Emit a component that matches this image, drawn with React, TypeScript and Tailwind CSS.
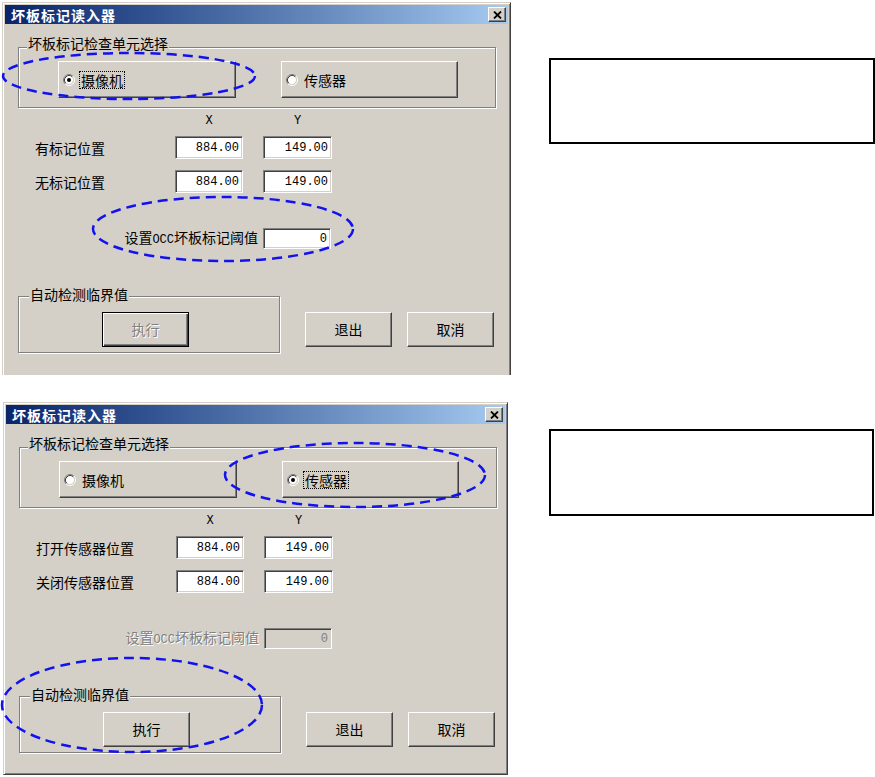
import type { ReactNode } from 'react'

const cjk = "font-['Noto_Sans_CJK_SC','Noto_Sans',sans-serif]"
const mono = "font-['Liberation_Mono',monospace]"

const raised =
    'border border-t-white border-l-white border-r-[#404040] border-b-[#404040] shadow-[inset_-1px_-1px_0_#808080]'
const raisedDefault =
    'border border-black shadow-[inset_1px_1px_0_#fff,inset_-1px_-1px_0_#404040,inset_-2px_-2px_0_#808080]'
const sunken =
    'border border-t-[#808080] border-l-[#808080] border-r-white border-b-white shadow-[inset_1px_1px_0_#404040,inset_-1px_-1px_0_#d4d0c8]'
const etched = 'border border-[#808080] shadow-[inset_1px_1px_0_#fff,1px_1px_0_#fff]'
const disabledText = 'text-[#808080] [text-shadow:1px_1px_0_#fff]'

function RadioDot({ checked }: { checked: boolean }) {
    return (
        <svg width="12" height="12" viewBox="0 0 12 12" className="shrink-0">
            <circle cx="6" cy="6" r="4.2" fill="#fff" />
            <path d="M2.11 9.89 A5.5 5.5 0 0 1 9.89 2.11" stroke="#808080" fill="none" />
            <path d="M9.89 2.11 A5.5 5.5 0 0 1 2.11 9.89" stroke="#fff" fill="none" />
            <path d="M2.82 9.18 A4.5 4.5 0 0 1 9.18 2.82" stroke="#404040" fill="none" />
            <path d="M9.18 2.82 A4.5 4.5 0 0 1 2.82 9.18" stroke="#d4d0c8" fill="none" />
            {checked && <circle cx="6" cy="6" r="2" fill="#000" />}
        </svg>
    )
}

function RadioButton({ label, checked, width }: { label: string; checked: boolean; width: string }) {
    return (
        <div className={`${raised} ${width} h-[37px] flex items-center pl-[4px] bg-[#d4d0c8]`}>
            <RadioDot checked={checked} />
            <span
                className={`ml-[4px] px-[1px] leading-[16px] text-[14px] text-black ${cjk} border border-dotted ${
                    checked ? 'border-black' : 'border-transparent'
                }`}
            >
                {label}
            </span>
        </div>
    )
}

function PushButton({ children, isDefault, disabled }: { children: ReactNode; isDefault?: boolean; disabled?: boolean }) {
    return (
        <div
            className={`${isDefault ? raisedDefault : raised} w-[87px] h-[35px] flex items-center justify-center text-[14px] ${cjk} ${
                disabled ? disabledText : 'text-black'
            }`}
        >
            {children}
        </div>
    )
}

function NumberBox({ value, width, height, disabled }: { value: string; width: string; height: string; disabled?: boolean }) {
    return (
        <div
            className={`${sunken} ${width} ${height} flex items-center justify-end pr-[3px] text-[12px] ${mono} ${
                disabled ? 'bg-[#d4d0c8] text-[#808080]' : 'bg-white text-black'
            }`}
        >
            {value}
        </div>
    )
}

function Dialog({
    second,
}: {
    second?: boolean
}) {
    const outer = second
        ? 'w-[505px] border border-t-[#d4d0c8] border-l-[#d4d0c8] border-r-[#404040] border-b-[#404040] shadow-[inset_1px_1px_0_#fff,inset_-1px_-1px_0_#808080]'
        : 'w-[509px] border border-b-0 border-t-[#d4d0c8] border-l-[#d4d0c8] border-r-[#404040] shadow-[inset_1px_1px_0_#fff,inset_-1px_0_0_#808080]'

    const rows = second ? ['打开传感器位置', '关闭传感器位置'] : ['有标记位置', '无标记位置']

    return (
        <div className={`${outer} h-[373px] bg-[#d4d0c8] p-[2px] flex flex-col`}>
            {/* Title bar */}
            <div className="h-[19px] flex items-center bg-linear-to-r from-[#0a246a] to-[#a6caf0]">
                <span className={`pl-[6px] text-[14px] leading-[16px] font-bold tracking-[1px] text-white ${cjk}`}>
                    坏板标记读入器
                </span>
                <div className={`${raised} ml-auto mr-[2px] w-[18px] h-[15px] bg-[#d4d0c8] flex items-center justify-center`}>
                    <svg width="9" height="8" viewBox="0 0 9 8">
                        <path d="M1 0.5 L8 7.5 M8 0.5 L1 7.5" stroke="#000" strokeWidth="1.8" />
                    </svg>
                </div>
            </div>

            {/* Unit selection */}
            <div className={`relative ${etched} ml-[13px] mt-[23px] w-[478px] pt-[13px] pl-[39px] pb-[9px]`}>
                <span className={`absolute left-[8px] -top-[12px] px-[1px] bg-[#d4d0c8] text-[14px] leading-[14px] text-black ${cjk}`}>
                    坏板标记检查单元选择
                </span>
                <div className="flex gap-[45px]">
                    <RadioButton label="摄像机" checked={!second} width="w-[178px]" />
                    <RadioButton label="传感器" checked={!!second} width="w-[177px]" />
                </div>
            </div>

            {/* Coordinates */}
            <div className={`flex ml-[30px] mt-[6px] text-[12px] leading-[14px] text-black ${mono}`}>
                <div className="w-[140px]" />
                <div className="w-[68px] text-center">X</div>
                <div className="w-[69px] ml-[20px] text-center">Y</div>
            </div>
            {rows.map((label, i) => (
                <div key={label} className={`flex items-center ml-[30px] ${i === 0 ? 'mt-[8px]' : 'mt-[11px]'}`}>
                    <div className={`w-[140px] text-[14px] leading-[16px] text-black ${cjk}`}>{label}</div>
                    <NumberBox value="884.00" width="w-[68px]" height="h-[23px]" />
                    <div className="ml-[20px]">
                        <NumberBox value="149.00" width="w-[69px]" height="h-[23px]" />
                    </div>
                </div>
            ))}

            {/* Threshold */}
            <div className="flex items-center ml-[30px] mt-[35px]">
                <div
                    className={`w-[228px] pr-[5px] text-right text-[14px] leading-[16px] ${cjk} ${
                        second ? disabledText : 'text-black'
                    }`}
                >
                    设置<span className={`text-[12px] ${mono}`}>OCC</span>坏板标记阈值
                </div>
                <NumberBox value="0" width="w-[68px]" height="h-[21px]" disabled={second} />
            </div>

            {/* Bottom */}
            <div className="flex items-end ml-[13px] mt-[47px]">
                <div className={`relative ${etched} w-[262px] pl-[83px] pt-[15px] pb-[5px]`}>
                    <span className={`absolute left-[10px] -top-[10px] px-[1px] bg-[#d4d0c8] text-[14px] leading-[14px] text-black ${cjk}`}>
                        自动检测临界值
                    </span>
                    <PushButton isDefault={!second} disabled={!second}>
                        执行
                    </PushButton>
                </div>
                <div className="ml-[25px] mb-[6px]">
                    <PushButton>退出</PushButton>
                </div>
                <div className="ml-[15px] mb-[6px]">
                    <PushButton>取消</PushButton>
                </div>
            </div>
        </div>
    )
}

export default function App() {
    return (
        <div className="relative w-[875px] h-[777px] bg-white overflow-hidden">
            <div className="flex items-start pt-[2px] pl-[2px]">
                <Dialog />
                <div className="ml-[38px] mt-[56px] w-[326px] h-[86px] border-2 border-black bg-white" />
            </div>
            <div className="flex items-start mt-[27px] pl-[3px]">
                <Dialog second />
                <div className="ml-[41px] mt-[27px] w-[325px] h-[87px] border-2 border-black bg-white" />
            </div>

            {/* Hand-drawn annotation ellipses */}
            <svg className="absolute inset-0 pointer-events-none" width="875" height="777" viewBox="0 0 875 777">
                <g fill="none" stroke="#1212ee" strokeWidth="2.5" strokeDasharray="10 6">
                    <ellipse cx="129" cy="76" rx="126" ry="23" />
                    <ellipse cx="223" cy="229" rx="130" ry="32" />
                    <ellipse cx="355" cy="475" rx="130" ry="32" />
                    <ellipse cx="132" cy="705" rx="130" ry="47" />
                </g>
            </svg>
        </div>
    )
}
